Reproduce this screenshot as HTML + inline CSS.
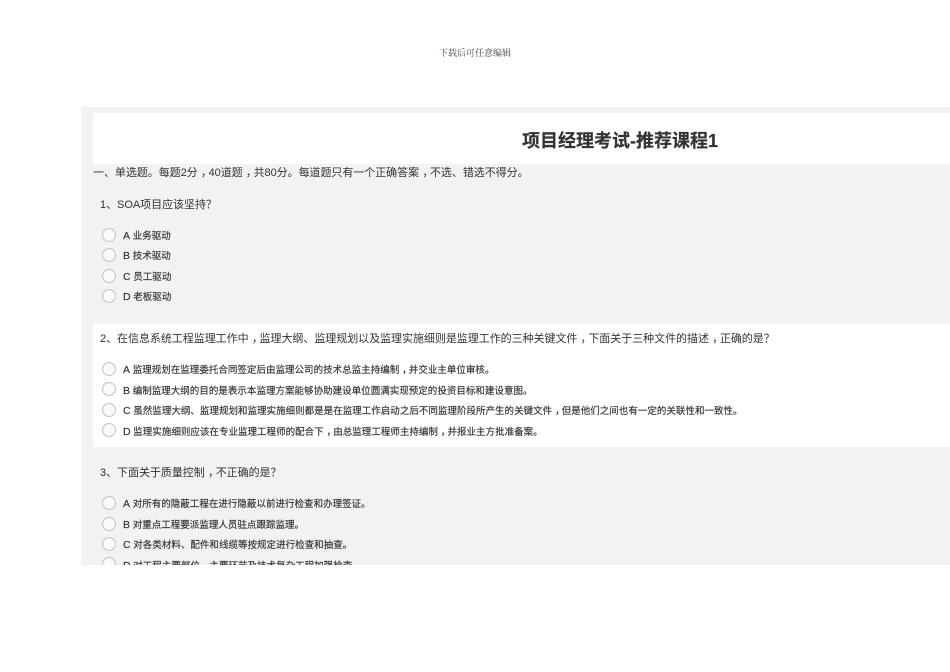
<!DOCTYPE html>
<html lang="zh">
<head>
<meta charset="utf-8">
<title>项目经理考试-推荐课程1</title>
<style>
html,body{margin:0;padding:0;background:#fff;width:950px;height:672px;overflow:hidden}
body{position:relative;font-family:"Liberation Sans","Noto Sans CJK SC",sans-serif;color:#333}
#hd{position:absolute;left:0;width:950px;top:47px;text-align:center;font-family:"Liberation Serif","Noto Serif CJK SC",serif;font-size:9px;line-height:13px;color:#444}
#wrap{position:absolute;left:81px;top:107px;width:869px;height:458px;background:#f2f2f2;overflow:hidden;filter:blur(.35px)}
.w{position:absolute;background:#fff;left:12px;width:857px}
.t{position:absolute;white-space:nowrap}
.h{font-size:18px;font-weight:bold;line-height:24px;color:#333;-webkit-text-stroke:.2px #333}
.s{font-size:11px;line-height:16px;color:#333;letter-spacing:-.05px}
.q{font-size:11px;line-height:16px;color:#333;letter-spacing:-.04px}
.o{font-size:9.5px;line-height:14px;left:42px;color:#333;letter-spacing:.02px;-webkit-text-stroke:.15px #333}
.o b{font-weight:normal;font-size:10.5px}
i{font-style:normal;font-family:"Noto Sans CJK TC",sans-serif}
u{text-decoration:none;position:relative;left:.3em}
.r{position:absolute;left:21.4px;width:12px;height:12px;border:1px solid #c4c4c4;border-radius:50%;background:#fafafa;box-shadow:inset 0 0 1px #ddd}
</style>
</head>
<body>
<div id="hd">下载后可任意编辑</div>
<div id="wrap">
  <div class="w" style="top:6px;height:51px"></div>
  <div class="w" style="top:217px;height:123px"></div>

  <div class="t h" style="left:441px;top:21.5px">项目经理考试-推荐课程1</div>
  <div class="t s" style="left:12px;top:57.6px">一、单选题。每题2分<u>，</u>40道题<u>，</u>共80分。每道题只有一个正确答案<u>，</u>不选、错选不得分。</div>

  <div class="t q" style="left:19px;top:89px">1、SOA项目应该坚持<i>？</i></div>
  <div class="r" style="top:121px"></div><div class="t o" style="top:122px"><b>A</b> 业务驱动</div>
  <div class="r" style="top:141px"></div><div class="t o" style="top:142px"><b>B</b> 技术驱动</div>
  <div class="r" style="top:162px"></div><div class="t o" style="top:163px"><b>C</b> 员工驱动</div>
  <div class="r" style="top:182px"></div><div class="t o" style="top:183px"><b>D</b> 老板驱动</div>

  <div class="t q" style="left:19px;top:223px">2、在信息系统工程监理工作中<u>，</u>监理大纲、监理规划以及监理实施细则是监理工作的三种关键文件<u>，</u>下面关于三种文件的描述<u>，</u>正确的是<i>？</i></div>
  <div class="r" style="top:255px"></div><div class="t o" style="top:255.6px"><b>A</b> 监理规划在监理委托合同签定后由监理公司的技术总监主持编制<u>，</u>并交业主单位审核。</div>
  <div class="r" style="top:275px"></div><div class="t o" style="top:276.6px"><b>B</b> 编制监理大纲的目的是表示本监理方案能够协助建设单位圆满实现预定的投资目标和建设意图。</div>
  <div class="r" style="top:296px"></div><div class="t o" style="top:296.6px"><b>C</b> 虽然监理大纲、监理规划和监理实施细则都是是在监理工作启动之后不同监理阶段所产生的关键文件<u>，</u>但是他们之间也有一定的关联性和一致性。</div>
  <div class="r" style="top:316px"></div><div class="t o" style="top:317.6px"><b>D</b> 监理实施细则应该在专业监理工程师的配合下<u>，</u>由总监理工程师主持编制<u>，</u>并报业主方批准备案。</div>

  <div class="t q" style="left:19px;top:357px">3、下面关于质量控制<u>，</u>不正确的是<i>？</i></div>
  <div class="r" style="top:389px"></div><div class="t o" style="top:390px"><b>A</b> 对所有的隐蔽工程在进行隐蔽以前进行检查和办理签证。</div>
  <div class="r" style="top:410px"></div><div class="t o" style="top:411px"><b>B</b> 对重点工程要派监理人员驻点跟踪监理。</div>
  <div class="r" style="top:430px"></div><div class="t o" style="top:431px"><b>C</b> 对各类材料、配件和线缆等按规定进行检查和抽查。</div>
  <div class="r" style="top:450px"></div><div class="t o" style="top:452px"><b>D</b> 对工程主要部位、主要环节及技术复杂工程加强检查。</div>
</div>
</body>
</html>
